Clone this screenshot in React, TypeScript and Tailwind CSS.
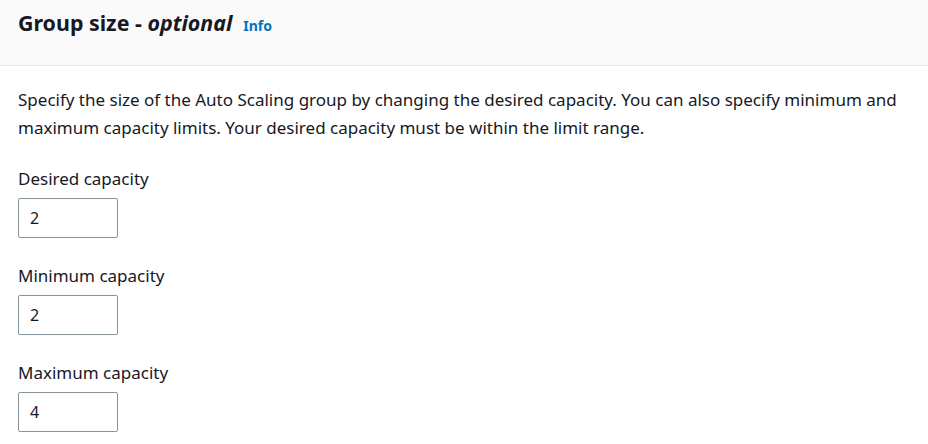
import React from 'react';

const fields = [
  { label: 'Desired capacity', value: '2' },
  { label: 'Minimum capacity', value: '2' },
  { label: 'Maximum capacity', value: '4' },
];

export default function App() {
  return (
    <div className="min-h-screen bg-white text-[#16191f] font-['Noto_Sans',sans-serif]">
      <div className="h-[66px] bg-[#fafafa] border-b border-[#e4e6e6] px-[18px] pt-[10px] flex items-baseline">
        <h2 className="text-[21.4px] font-bold leading-[26px]">
          Group size - <i className="font-bold">optional</i>
        </h2>
        <a className="ml-[11px] text-[14px] font-bold text-[#0073bb]">Info</a>
      </div>
      <div className="px-[18px] pt-[20px]">
        <p className="text-[17px] leading-[28px] max-w-[900px]">
          Specify the size of the Auto Scaling group by changing the desired capacity. You can also specify minimum and
          maximum capacity limits. Your desired capacity must be within the limit range.
        </p>
        <div className="mt-[26px] flex flex-col gap-[27px]">
          {fields.map((f) => (
            <div key={f.label}>
              <div className="text-[17px] leading-[22px]">{f.label}</div>
              <div className="mt-[8px] w-[100px] h-[40px] border border-[#879596] rounded-[2px] flex items-center px-[11px] text-[16px]">
                {f.value}
              </div>
            </div>
          ))}
        </div>
      </div>
    </div>
  );
}
